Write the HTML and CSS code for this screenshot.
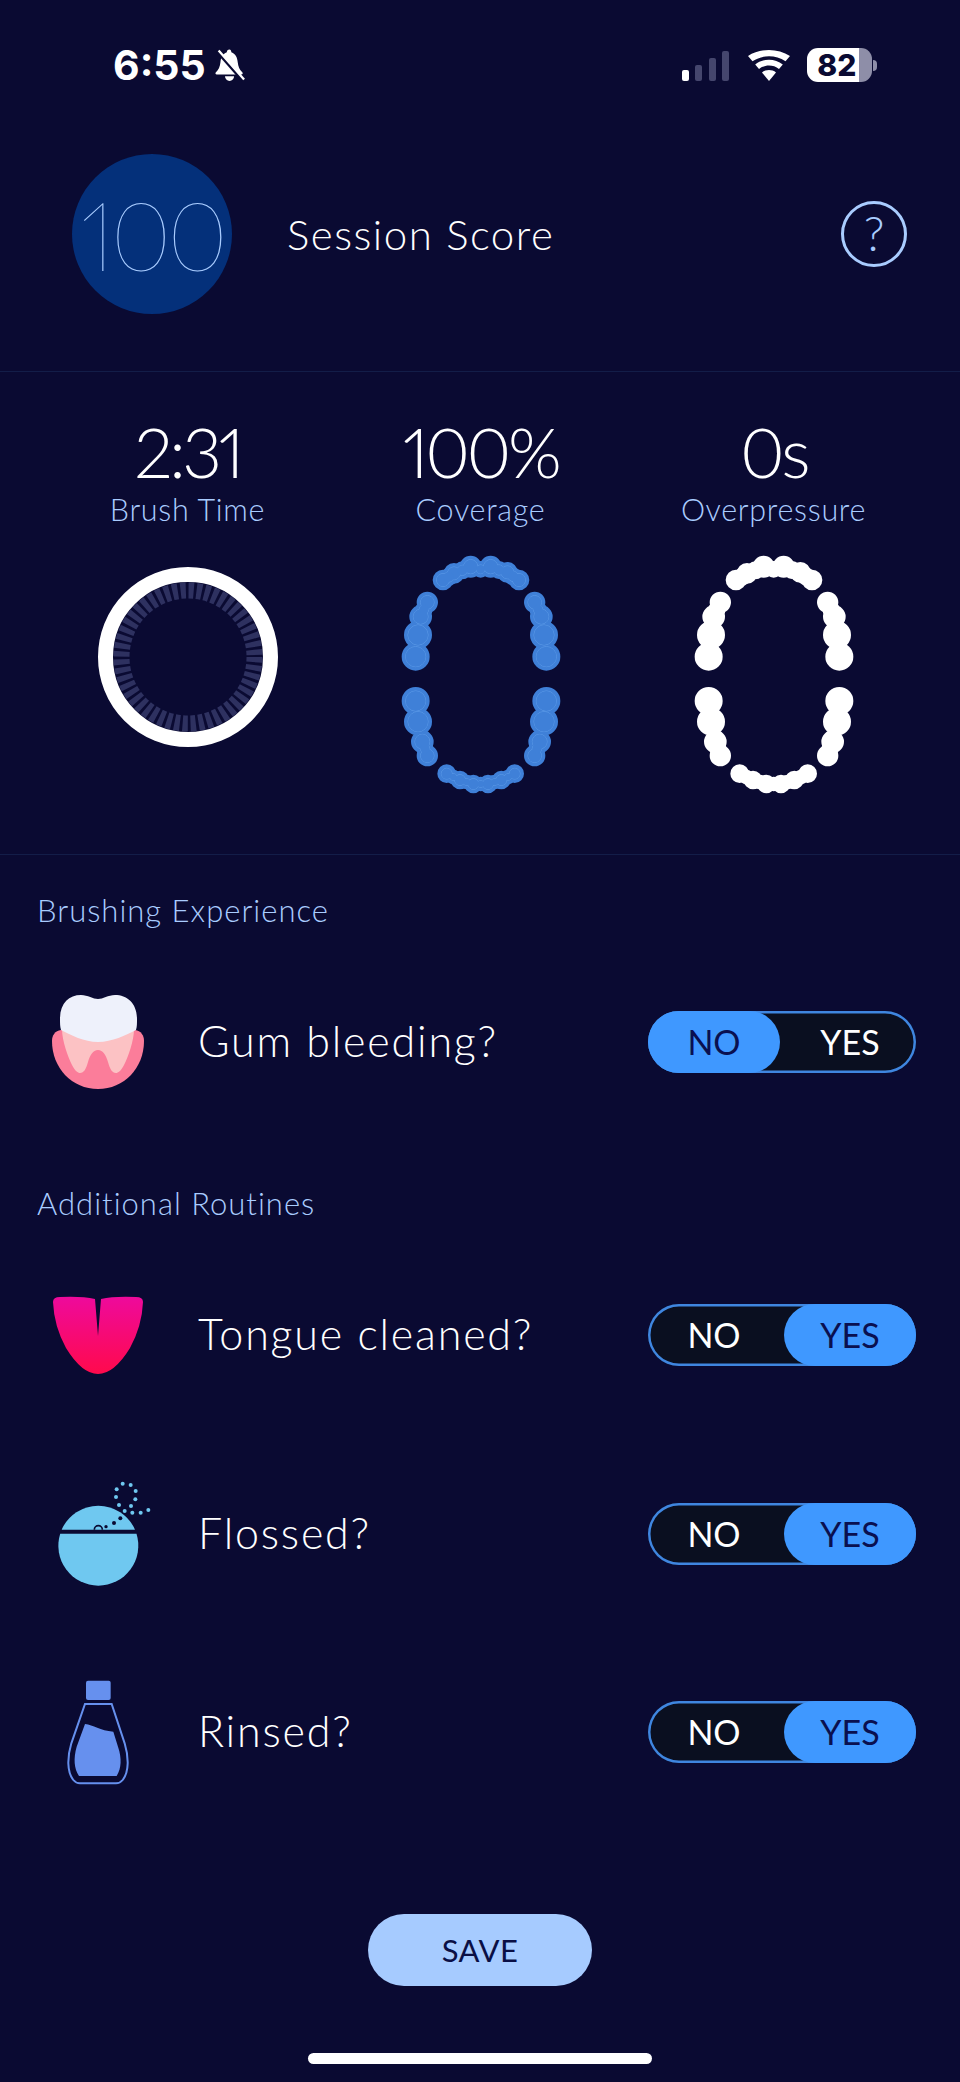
FILE: index.html
```html
<!DOCTYPE html>
<html lang="en">
<head>
	<meta charset="UTF-8">
	<meta name="viewport" content="width=device-width, initial-scale=1.0">
	<title>Session Score</title>
	<link rel="stylesheet" href="styles.css">
</head>
<body>
	<svg class="defs" width="0" height="0" aria-hidden="true">
		<defs>
			<g id="teeth">
				<circle cx="-114" cy="535" r="19"/><circle cx="-81" cy="515" r="19"/><circle cx="-31" cy="495" r="21"/>
				<circle cx="29" cy="495" r="21"/><circle cx="79" cy="512" r="19"/><circle cx="114" cy="535" r="19"/>
				<circle cx="-97" cy="526" r="15"/><circle cx="-56" cy="506" r="15"/><circle cx="-1" cy="503" r="13"/><circle cx="54" cy="505" r="15"/><circle cx="96" cy="524" r="15"/>

				<circle cx="-161" cy="602" r="20"/><circle cx="-181" cy="645" r="22"/><circle cx="-189" cy="700" r="30"/><circle cx="-196" cy="765" r="30"/>
				<circle cx="-171" cy="623" r="14"/>
				<circle cx="161" cy="602" r="20"/><circle cx="181" cy="645" r="22"/><circle cx="189" cy="700" r="30"/><circle cx="196" cy="765" r="30"/>
				<circle cx="171" cy="623" r="14"/>

				<circle cx="-196" cy="898" r="30"/><circle cx="-189" cy="960" r="30"/><circle cx="-176" cy="1020" r="22"/><circle cx="-161" cy="1062" r="20"/>
				<circle cx="-168" cy="1041" r="14"/>
				<circle cx="196" cy="898" r="30"/><circle cx="189" cy="960" r="30"/><circle cx="176" cy="1020" r="22"/><circle cx="161" cy="1062" r="20"/>
				<circle cx="168" cy="1041" r="14"/>

				<circle cx="-103" cy="1116" r="16"/><circle cx="-63" cy="1135" r="16"/><circle cx="-23" cy="1147" r="16"/>
				<circle cx="21" cy="1147" r="16"/><circle cx="61" cy="1135" r="16"/><circle cx="101" cy="1116" r="16"/>
				<circle cx="-83" cy="1126" r="10"/><circle cx="-43" cy="1141" r="10"/><circle cx="-1" cy="1147" r="10"/><circle cx="41" cy="1141" r="10"/><circle cx="81" cy="1126" r="10"/>
			</g>
		</defs>
	</svg>

	<div class="phone">
		<div class="status-bar">
			<span class="clock">6:55</span>
			<svg class="bell" viewBox="0 0 33 36">
				<path class="bell-body" d="M16 1c-2 0-3 1.500-3 3C8 6 6.500 10 6 15c-.500 5-2 8-5 11-1 1-.500 2.500 1 2.500h27c1.500 0 2-1.500 1-2.500-3-3-4.500-6-5-11-.500-5-2-9-7-11 0-1.500-1-3-2-3z"/>
				<path class="bell-body" d="M11 30.500h10c0 3-2.200 5-5 5s-5-2-5-5z"/>
				<path class="bell-gap" d="M2 3l28 32"/>
				<path class="bell-slash" d="M4 2l28 32"/>
			</svg>
			<div class="signal">
				<i class="bar bar-1"></i><i class="bar bar-2"></i><i class="bar bar-3"></i><i class="bar bar-4"></i>
			</div>
			<svg class="wifi" viewBox="0 0 42 31">
				<path d="M21 31l-7-8.500c4-3.200 10-3.200 14 0z"/>
				<path d="M11 19l-3.800-4.500c7.800-6.300 19.800-6.300 27.600 0L31 19c-5.800-4.600-14.200-4.600-20 0z"/>
				<path d="M4.500 11.200L0 6C12-2 30-2 42 6l-4.500 5.200C27.500 4.600 14.500 4.600 4.500 11.200z"/>
			</svg>
			<div class="battery"><span class="battery-level">82</span></div>
			<i class="battery-nub"></i>
		</div>

		<header class="session">
			<div class="score">100</div>
			<div class="session-title">Session Score</div>
			<div class="help">?</div>
		</header>

		<section class="stats">
			<div class="stat">
				<div class="stat-value">2:31</div>
				<div class="stat-label">Brush Time</div>
				<svg class="ring" viewBox="0 0 180 180">
					<circle class="ring-ticks" cx="90" cy="90" r="66.500"/>
					<circle class="ring-done" cx="90" cy="90" r="82.500"/>
				</svg>
			</div>
			<div class="stat">
				<div class="stat-value">100%</div>
				<div class="stat-label">Coverage</div>
				<svg class="mouth" viewBox="-240 460 480 720">
					<use href="#teeth" class="teeth-blue-base"/>
					<use href="#teeth" class="teeth-blue-line"/>
					<use href="#teeth" class="teeth-blue-top"/>
				</svg>
			</div>
			<div class="stat">
				<div class="stat-value">0s</div>
				<div class="stat-label">Overpressure</div>
				<svg class="mouth" viewBox="-240 460 480 720">
					<use href="#teeth" class="teeth-white"/>
				</svg>
			</div>
		</section>

		<h2 class="section-title">Brushing Experience</h2>
		<div class="row row-first">
			<div class="row-icon">
				<svg class="icon-tooth" viewBox="0 0 92 94">
					<path class="gum" d="M0 46c0-6 3-10 9-11h74c6 1 9 5 9 11 0 27-20 48-46 48S0 73 0 46z"/>
					<path class="root" d="M10 34l72 0c0 12-6 28-10 36-3 6-6 8-8 8-4 0-6-4-8-11-2-7-5-12-10-12s-8 5-10 12c-2 7-4 11-8 11-2 0-5-2-8-8-4-8-10-24-10-36z"/>
					<path class="crown" d="M8 24C8 8 17 0 29 0c7 0 12 4 17 4s10-4 17-4c12 0 22 8 22 24 0 4 0 8-1 11-10 5-24 12-38 12S19 40 9 35c-1-3-1-7-1-11z"/>
				</svg>
			</div>
			<div class="row-text">Gum bleeding?</div>
			<div class="toggle">
				<span class="option option-on">NO</span>
				<span class="option">YES</span>
			</div>
		</div>

		<h2 class="section-title section-title-second">Additional Routines</h2>
		<div class="row row-tongue">
			<div class="row-icon">
				<svg class="icon-tongue" viewBox="0 0 92 78">
					<defs>
						<linearGradient id="tongue-fill" x1="0" y1="0" x2="0" y2="1">
							<stop offset="0" stop-color="#ee0a9c"/>
							<stop offset="1" stop-color="#ff0a4c"/>
						</linearGradient>
					</defs>
					<path fill="url(#tongue-fill)" d="M1 6Q1 1 8 1Q30 0 43 3L46 40L49 3Q62 0 84 1Q91 1 91 6Q90 30 78 52Q62 78 46 78Q30 78 14 52Q2 30 1 6Z"/>
				</svg>
			</div>
			<div class="row-text">Tongue cleaned?</div>
			<div class="toggle">
				<span class="option">NO</span>
				<span class="option option-on">YES</span>
			</div>
		</div>

		<div class="row row-flossed">
			<div class="row-icon">
				<svg class="icon-tall" viewBox="66 63 276 312">
					<path class="floss" d="M95 206A120 120 0 0 1 315 206Z"/>
					<path class="floss" d="M319.500 218A120 120 0 1 1 90.500 218Z"/>
					<g class="floss">
						<circle cx="278" cy="68" r="6"/><circle cx="302" cy="72" r="6"/><circle cx="260" cy="85" r="6"/><circle cx="317" cy="90" r="6"/>
						<circle cx="258" cy="108" r="6"/><circle cx="316" cy="115" r="6"/><circle cx="267" cy="132" r="6"/><circle cx="303" cy="135" r="6"/>
						<circle cx="284" cy="150" r="6"/><circle cx="307" cy="155" r="6"/><circle cx="332" cy="155" r="6"/><circle cx="355" cy="147" r="6"/>
					</g>
					<g class="floss-dark">
						<circle cx="228" cy="197" r="5"/><circle cx="252" cy="186" r="6"/><circle cx="271" cy="172" r="6"/>
					</g>
					<path class="floss-loop" d="M193 206a12 12 0 0 1 24 0"/>
				</svg>
			</div>
			<div class="row-text">Flossed?</div>
			<div class="toggle">
				<span class="option">NO</span>
				<span class="option option-on">YES</span>
			</div>
		</div>

		<div class="row row-rinsed">
			<div class="row-icon">
				<svg class="icon-tall" viewBox="66 660 276 312">
					<rect class="bottle" x="168" y="662" width="74" height="58" rx="6"/>
					<path class="bottle-outline" d="M165 732H245L284 850C296 890 298 935 278 960Q270 970 258 970H150Q138 970 130 960C110 935 112 890 124 850Z"/>
					<path class="bottle" d="M165 792C190 795 210 812 250 815L264 860C276 895 274 925 260 948H147C132 925 130 895 140 860Z"/>
				</svg>
			</div>
			<div class="row-text">Rinsed?</div>
			<div class="toggle">
				<span class="option">NO</span>
				<span class="option option-on">YES</span>
			</div>
		</div>

		<button class="save">SAVE</button>
		<div class="home-bar"></div>
	</div>
</body>
</html>
```

FILE: styles.css
```css
* {
	padding: 0;
	margin: 0;
	box-sizing: border-box;
}
body {
	background: #0a0a32;
	font-family: "Lato", "Noto Sans", sans-serif;
	color: #ffffff;
}
.defs {
	position: absolute;
}
.phone {
	width: 960px;
	height: 2082px;
	overflow: hidden;
	display: flex;
	flex-direction: column;
}

/* status bar */
.status-bar {
	height: 130px;
	display: flex;
	align-items: center;
	padding-left: 113px;
}
.clock {
	font-family: "Inter", sans-serif;
	font-weight: 700;
	font-size: 41px;
	line-height: 50px;
}
.bell {
	width: 30px;
	height: 34px;
	margin-left: 9px;
}
.bell-body {
	fill: #ffffff;
}
.bell-gap {
	stroke: #0a0a32;
	stroke-width: 3;
}
.bell-slash {
	stroke: #ffffff;
	stroke-width: 2.500;
}
.signal {
	display: flex;
	align-items: flex-end;
	gap: 6.500px;
	height: 31px;
	margin-left: 437px;
}
.bar {
	display: block;
	width: 7px;
	border-radius: 2px;
	background: #45466d;
}
.bar-1 {
	height: 11px;
	background: #ffffff;
}
.bar-2 {
	height: 16px;
}
.bar-3 {
	height: 23px;
}
.bar-4 {
	height: 30px;
}
.wifi {
	width: 42px;
	height: 31px;
	margin-left: 19px;
	fill: #ffffff;
}
.battery {
	width: 65px;
	height: 34px;
	margin-left: 17px;
	border-radius: 11px;
	background: linear-gradient(to right, #ffffff 80%, #8e8ea8 80%);
	display: flex;
	align-items: center;
	justify-content: center;
}
.battery-level {
	font-family: "Inter", sans-serif;
	font-weight: 800;
	font-size: 30px;
	line-height: 34px;
	color: #0a0a32;
	margin-left: -6px;
}
.battery-nub {
	display: block;
	width: 4px;
	height: 11px;
	margin-left: 1px;
	border-radius: 0 4px 4px 0;
	background: #8e8ea8;
}

/* score header */
.session {
	display: flex;
	align-items: center;
	padding: 24px 53px 57px 72px;
	border-bottom: 1px solid #131d48;
}
.score {
	width: 160px;
	height: 160px;
	border-radius: 50%;
	background: #04307a;
	color: #a9ccff;
	font-weight: 100;
	font-size: 96px;
	font-variant-numeric: proportional-nums;
	letter-spacing: -5px;
	line-height: 160px;
	text-align: center;
}
.session-title {
	margin-left: 55px;
	font-weight: 300;
	font-size: 42px;
	letter-spacing: 1.500px;
}
.help {
	width: 66px;
	height: 66px;
	margin-left: auto;
	border: 3.500px solid #a9ccff;
	border-radius: 50%;
	color: #a9ccff;
	font-weight: 300;
	font-size: 48px;
	line-height: 58px;
	text-align: center;
}

/* stats */
.stats {
	height: 483px;
	padding: 40px 41px 0;
	display: grid;
	grid-template-columns: repeat(3, 293px);
	align-items: start;
	border-bottom: 1px solid #131d48;
}
.stat {
	display: flex;
	flex-direction: column;
	align-items: center;
}
.stat-value {
	font-weight: 300;
	font-size: 69px;
	font-variant-numeric: proportional-nums;
	letter-spacing: -3.500px;
	line-height: 79px;
}
.stat-label {
	font-weight: 300;
	font-size: 30.500px;
	letter-spacing: 0.700px;
	line-height: 36px;
	color: #a9ccff;
}
.ring {
	width: 180px;
	height: 180px;
	margin-top: 40px;
}
.ring-ticks {
	fill: none;
	stroke: #2e3160;
	stroke-width: 16;
	stroke-dasharray: 5.300 2.736;
}
.ring-done {
	fill: none;
	stroke: #ffffff;
	stroke-width: 15;
}
.mouth {
	width: 160px;
	height: 240px;
	margin-top: 28px;
}
.teeth-white {
	fill: #ffffff;
	stroke: #ffffff;
	stroke-width: 24;
}
.teeth-blue-base {
	fill: #3f80d8;
	stroke: #3f80d8;
	stroke-width: 24;
}
.teeth-blue-line {
	fill: #5c9ae8;
	stroke: #5c9ae8;
	stroke-width: 3;
}
.teeth-blue-top {
	fill: #3f80d8;
	stroke: #3f80d8;
	stroke-width: 0;
}

/* question rows */
.section-title {
	margin-top: 37px;
	padding-left: 37px;
	font-weight: 300;
	font-size: 31px;
	letter-spacing: 1px;
	line-height: 36px;
	color: #a9ccff;
}
.section-title-second {
	margin-top: 0;
}
.row {
	height: 100px;
	display: flex;
	align-items: center;
	padding: 0 44px 0 52px;
}
.row-first {
	margin-top: 64px;
	margin-bottom: 93px;
}
.row-tongue {
	margin-top: 64px;
}
.row-flossed {
	margin-top: 99px;
}
.row-rinsed {
	margin-top: 98px;
}
.row-icon {
	width: 92px;
	display: flex;
	justify-content: center;
	flex-shrink: 0;
}
.row-text {
	margin-left: 54px;
	margin-bottom: 3px;
	font-weight: 300;
	font-size: 43px;
	letter-spacing: 1.800px;
}
.icon-tooth {
	width: 92px;
	height: 94px;
}
.icon-tongue {
	width: 92px;
	height: 78px;
}
.icon-tall {
	width: 92px;
	height: 104px;
	overflow: visible;
}
.gum {
	fill: #fb7d9a;
}
.root {
	fill: #fcc2c4;
}
.crown {
	fill: #eef1fb;
}
.floss {
	fill: #6fc8f0;
}
.floss-dark {
	fill: #0a0a32;
}
.floss-loop {
	fill: none;
	stroke: #0a0a32;
	stroke-width: 5;
}
.bottle {
	fill: #6690ee;
}
.bottle-outline {
	fill: none;
	stroke: #6690ee;
	stroke-width: 6;
}

/* toggle */
.toggle {
	width: 268px;
	height: 62px;
	margin-left: auto;
	display: flex;
	justify-content: space-between;
	border-radius: 31px;
	background: #0a0f20;
	box-shadow: inset 0 0 0 2.500px #3f86e0;
}
.option {
	width: 132px;
	height: 62px;
	border-radius: 31px;
	font-size: 34px;
	line-height: 62px;
	text-align: center;
	color: #ffffff;
}
.option-on {
	background: #3f98ff;
	color: #0a1050;
}

/* bottom */
.save {
	width: 224px;
	height: 72px;
	margin: 132px auto 0;
	border: 0;
	border-radius: 36px;
	background: #a6cbff;
	color: #0a0f45;
	font-family: "Lato", sans-serif;
	font-size: 31px;
	letter-spacing: 0.500px;
}
.home-bar {
	width: 344px;
	height: 11px;
	margin: 67px auto 0;
	border-radius: 6px;
	background: #ffffff;
}
```
